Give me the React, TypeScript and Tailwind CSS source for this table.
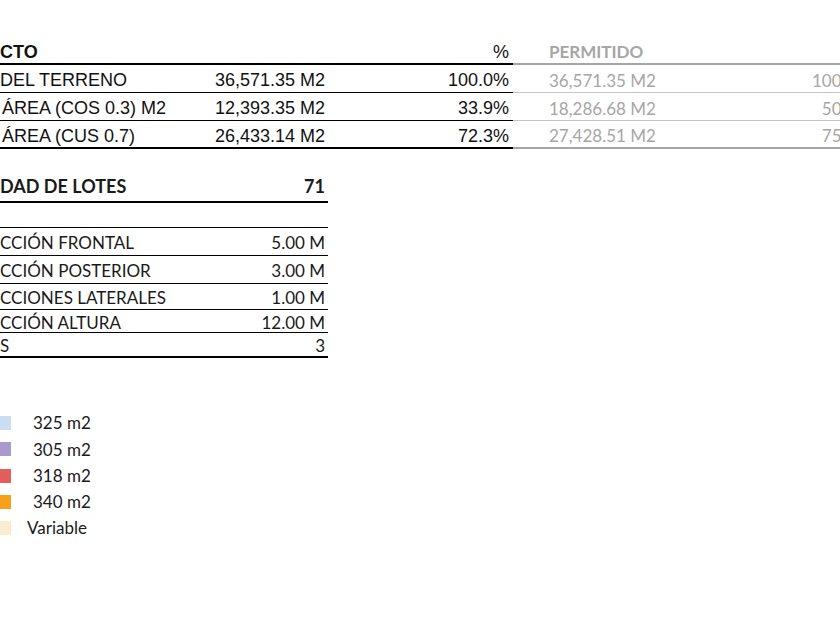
import React from "react";

const arial = "font-['Liberation_Sans',Arial,sans-serif]";
const calibri = "font-['Lato','Open_Sans',sans-serif]";

const topRows = [
    { label: "DEL TERRENO", pad: "pl-0", value: "36,571.35 M2", pct: "100.0%", perm: "36,571.35 M2", permPct: "100.0%" },
    { label: "ÁREA (COS 0.3) M2", pad: "pl-[2px]", value: "12,393.35 M2", pct: "33.9%", perm: "18,286.68 M2", permPct: "50.0%" },
    { label: "ÁREA (CUS 0.7)", pad: "pl-[2px]", value: "26,433.14 M2", pct: "72.3%", perm: "27,428.51 M2", permPct: "75.0%" },
];

const restricciones = [
    { label: "CCIÓN FRONTAL", value: "5.00 M", h: "h-[28px]" },
    { label: "CCIÓN POSTERIOR", value: "3.00 M", h: "h-[28px]" },
    { label: "CCIONES LATERALES", value: "1.00 M", h: "h-[26px]" },
    { label: "CCIÓN ALTURA", value: "12.00 M", h: "h-[23px]" },
    { label: "S", value: "3", h: "h-[25px]" },
];

const legend = [
    { color: "bg-[#c9def2]", label: "325 m2", pad: "pl-[33px]" },
    { color: "bg-[#a899cf]", label: "305 m2", pad: "pl-[33px]" },
    { color: "bg-[#e35d5d]", label: "318 m2", pad: "pl-[33px]" },
    { color: "bg-[#f7a01a]", label: "340 m2", pad: "pl-[33px]" },
    { color: "bg-[#fdebd0]", label: "Variable", pad: "pl-[27px]" },
];

const App = () => {
    return (
        <div className="w-[840px] h-[630px] overflow-hidden bg-white pt-[37px]">
            {/* tabla superior */}
            <div className="flex w-[900px]">
                <div className={`w-[513px] text-[18px] text-[#111] ${arial}`}>
                    <div className="flex h-[28px] items-center border-b-2 border-black pt-[4px]">
                        <span className="w-[325px] font-bold">CTO</span>
                        <span className="w-[184px] text-right">%</span>
                    </div>
                    {topRows.map((row, i) => (
                        <div
                            key={i}
                            className={`flex h-[28px] items-center border-black pt-[4px] ${i === topRows.length - 1 ? "border-b-2" : "border-b"}`}
                        >
                            <span className={`w-[213px] whitespace-nowrap ${row.pad}`}>{row.label}</span>
                            <span className="w-[112px] text-right">{row.value}</span>
                            <span className="w-[184px] text-right">{row.pct}</span>
                        </div>
                    ))}
                </div>
                <div className={`w-[387px] text-[17px] text-[#a6a6a6] ${calibri}`}>
                    <div className="flex h-[28px] items-center border-b-2 border-[#a6a6a6] pl-[36px] pt-[4px]">
                        <span className="font-bold">PERMITIDO</span>
                    </div>
                    {topRows.map((row, i) => (
                        <div
                            key={i}
                            className={`flex h-[28px] items-center pl-[36px] pt-[4px] ${i === topRows.length - 1 ? "border-b-2 border-[#a6a6a6]" : "border-b border-[#c4c4c4]"}`}
                        >
                            <span className="w-[200px]">{row.perm}</span>
                            <span className="w-[120px] text-right">{row.permPct}</span>
                        </div>
                    ))}
                </div>
            </div>

            {/* lotes y restricciones */}
            <div className={`mt-[23px] w-[328px] text-[17px] text-[#1a1a1a] ${calibri}`}>
                <div className="flex h-[31px] items-center justify-between border-b-2 border-black pr-[3px] text-[18px] font-bold">
                    <span>DAD DE LOTES</span>
                    <span>71</span>
                </div>
                <div className="mt-[24px] border-t border-black">
                    {restricciones.map((r, i) => (
                        <div
                            key={i}
                            className={`flex ${r.h} items-center justify-between border-black pr-[3px] pt-[3px] ${i === restricciones.length - 1 ? "border-b-2" : "border-b"}`}
                        >
                            <span className="whitespace-nowrap">{r.label}</span>
                            <span>{r.value}</span>
                        </div>
                    ))}
                </div>
            </div>

            {/* leyenda */}
            <div className={`mt-[52px] flex flex-col text-[17px] text-[#1a1a1a] ${calibri}`}>
                {legend.map((l, i) => (
                    <div key={i} className="relative flex h-[26.25px] items-center">
                        <span className={`absolute left-0 h-[14px] w-[11px] ${l.color}`} />
                        <span className={l.pad}>{l.label}</span>
                    </div>
                ))}
            </div>
        </div>
    );
};

export default App;
